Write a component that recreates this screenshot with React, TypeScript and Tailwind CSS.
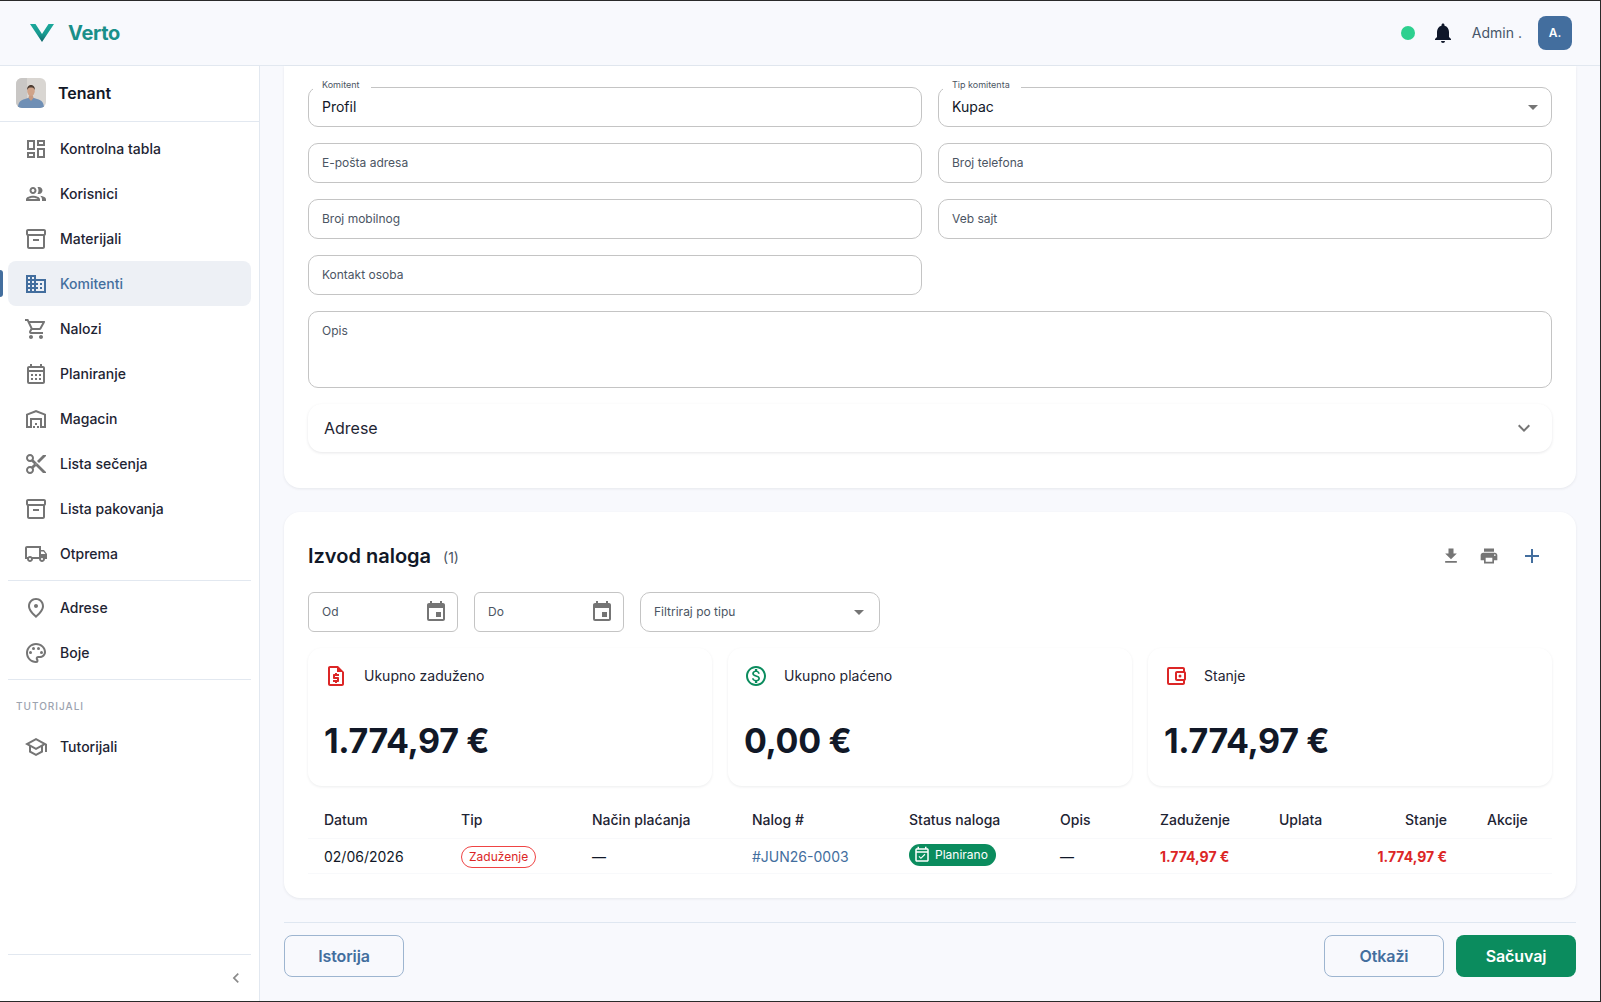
import React from "react";
import {
  MdOutlineDashboard, MdOutlinePeople, MdOutlineInventory2, MdBusiness, MdOutlineShoppingCart,
  MdOutlineCalendarMonth, MdOutlineWarehouse, MdOutlineContentCut, MdOutlineLocalShipping,
  MdOutlinePlace, MdOutlinePalette, MdOutlineSchool, MdNotifications, MdEvent, MdFileDownload,
  MdPrint, MdAdd, MdOutlineRequestQuote, MdOutlineMonetizationOn, MdOutlineAccountBalanceWallet,
  MdOutlineEventAvailable, MdExpandMore, MdChevronLeft, MdArrowDropDown,
} from "react-icons/md";

function Logo() {
  return (
    <svg width="24" height="18" viewBox="0 0 24 18" className="shrink-0">
      <defs>
        <linearGradient id="lg" x1="0" y1="0" x2="0" y2="1">
          <stop offset="0" stopColor="#1ba89b" />
          <stop offset="0.55" stopColor="#189a90" />
          <stop offset="1" stopColor="#0c6468" />
        </linearGradient>
      </defs>
      <polygon points="0,0 5.500,0 12,10 18.500,0 24,0 12,18" fill="url(#lg)" />
    </svg>
  );
}

function Photo() {
  return (
    <svg width="30" height="30" viewBox="0 0 30 30" className="rounded-[6px] shrink-0">
      <rect width="30" height="30" fill="#d9d6d2" />
      <rect width="11" height="30" fill="#c9c7c5" />
      <path d="M2 30c0-5 2-8 7-9l6-2 6 2c5 1 7 4 7 9z" fill="#6f8fb5" />
      <path d="M12.500 20l2.500 3 2.500-3-.8-3h-3.400z" fill="#c79a80" />
      <ellipse cx="15" cy="13" rx="3.800" ry="4.800" fill="#d0a388" />
      <path d="M11.200 12c-.4-3.500 1.800-5 3.800-5s4.200 1.500 3.800 5c-.9-1.800-1.800-2.400-3.800-2.400s-2.900.6-3.800 2.400z" fill="#4d3d33" />
    </svg>
  );
}

const navA = [
  { t: "Kontrolna tabla", I: MdOutlineDashboard },
  { t: "Korisnici", I: MdOutlinePeople },
  { t: "Materijali", I: MdOutlineInventory2 },
  { t: "Komitenti", I: MdBusiness, active: true },
  { t: "Nalozi", I: MdOutlineShoppingCart },
  { t: "Planiranje", I: MdOutlineCalendarMonth },
  { t: "Magacin", I: MdOutlineWarehouse },
  { t: "Lista sečenja", I: MdOutlineContentCut },
  { t: "Lista pakovanja", I: MdOutlineInventory2 },
  { t: "Otprema", I: MdOutlineLocalShipping },
];

function NavItem({ t, I, active }: { t: string; I: any; active?: boolean }) {
  return (
    <div className="relative h-[45px]">
      {active && <span className="absolute left-[-8px] top-[9px] h-[27px] w-[3px] rounded-r-[3px] bg-[#436e9e]" />}
      <div className={`h-full flex items-center gap-3 pl-4 rounded-[8px] text-sm font-medium ${active ? "bg-[#edf0f5] text-[#436e9e]" : "text-[#1e2433]"}`}>
        <I size={24} className={active ? "text-[#436e9e]" : "text-[#757575]"} />
        <span>{t}</span>
      </div>
    </div>
  );
}

function Field({ label, value, notch, arrow, className = "" }: { label?: string; value?: string; notch?: string; arrow?: boolean; className?: string }) {
  return (
    <div className={`relative h-10 rounded-[10px] border border-[#c4c4c4] bg-white flex items-center pl-[13px] pr-[6px] ${className}`}>
      {notch && (
        <span className="absolute left-[4px] top-[-10px] bg-white pl-[9px] pr-[11px] text-[9px] leading-[14px] text-[#4b5563]">{notch}</span>
      )}
      {value ? (
        <span className="text-sm text-[#111827]">{value}</span>
      ) : (
        <span className="text-xs text-[#4b5563]">{label}</span>
      )}
      {arrow && <MdArrowDropDown size={24} className="ml-auto text-[#757575]" />}
    </div>
  );
}

function DateField({ label }: { label: string }) {
  return (
    <div className="h-10 w-[150px] rounded-[6px] border border-[#c4c4c4] flex items-center justify-between pl-[13px] pr-[9px]">
      <span className="text-xs text-[#4b5563]">{label}</span>
      <MdEvent size={24} className="text-[#757575]" />
    </div>
  );
}

function Stat({ I, color, label, value }: { I: any; color: string; label: string; value: string }) {
  return (
    <div className="h-[138px] rounded-[14px] bg-white shadow-[0_1px_3px_rgba(15,23,42,0.08)] pl-4 pt-4">
      <div className="flex items-center gap-4 h-6">
        <I size={24} className={color} />
        <span className="text-sm text-[#1e2433]">{label}</span>
      </div>
      <div className="mt-[33px] text-[34px] leading-10 tracking-[-0.34px] font-bold text-[#111827]">{value}</div>
    </div>
  );
}

const cols = "grid grid-cols-[137px_131px_160px_157px_151px_100px_119px_80px_120px_89px] items-center";

export default function App() {
  return (
    <div className="w-[1601px] h-[1002px] overflow-hidden border-t border-r border-b border-[#2a2a2a] bg-[#f8f9fd] font-['Inter',sans-serif] flex flex-col">
      <header className="h-[65px] shrink-0 border-b border-[#e2e8f0] flex items-center pl-[30px] pr-7">
        <Logo />
        <span className="ml-[14px] text-xl font-bold tracking-[-0.3px] text-[#1a8f8a]">Verto</span>
        <div className="ml-auto flex items-center gap-4">
          <span className="w-[14px] h-[14px] rounded-full bg-[#2dd08f]" />
          <MdNotifications size={24} className="text-[#0f172a]" />
          <span className="ml-[1px] text-sm text-[#475569]">Admin .</span>
          <span className="w-[34px] h-[34px] rounded-[8px] bg-[#436e9e] flex items-center justify-center text-xs font-semibold text-white">A.</span>
        </div>
      </header>

      <div className="flex flex-1 min-h-0">
        <aside className="w-[260px] shrink-0 bg-white border-r border-[#e2e8f0] flex flex-col">
          <div className="h-[56px] shrink-0 border-b border-[#e2e8f0] flex items-center gap-3 pl-4 pb-[1px]">
            <Photo />
            <span className="text-base font-semibold text-[#111827]">Tenant</span>
          </div>
          <nav className="flex-1 flex flex-col px-2 pt-[4px]">
            {navA.map((n) => <NavItem key={n.t} {...n} />)}
            <div className="mt-1 mb-1 h-px bg-[#e2e8f0]" />
            <NavItem t="Adrese" I={MdOutlinePlace} />
            <NavItem t="Boje" I={MdOutlinePalette} />
            <div className="mt-1 h-px bg-[#e2e8f0]" />
            <div className="pl-2 mt-[20px] mb-[12px] text-[10px] leading-3 font-medium tracking-[1px] text-[#9ca3af]">TUTORIJALI</div>
            <NavItem t="Tutorijali" I={MdOutlineSchool} />
            <div className="mt-auto h-px bg-[#e2e8f0]" />
            <div className="h-[46px] flex items-center justify-end pr-[5px]">
              <MdChevronLeft size={20} className="text-[#8a8a8a]" />
            </div>
          </nav>
        </aside>

        <main className="flex-1 min-w-0 flex flex-col px-6">
          <section className="bg-white rounded-b-[16px] shadow-[0_1px_3px_rgba(15,23,42,0.08)] px-6 pt-[21px] pb-9">
            <div className="grid grid-cols-2 gap-4">
              <Field value="Profil" notch="Komitent" />
              <Field value="Kupac" notch="Tip komitenta" arrow />
              <Field label="E-pošta adresa" />
              <Field label="Broj telefona" />
              <Field label="Broj mobilnog" />
              <Field label="Veb sajt" />
              <Field label="Kontakt osoba" />
              <div />
              <div className="col-span-2 h-[77px] rounded-[10px] border border-[#c4c4c4] pl-[13px] pt-[11px] text-xs leading-4 text-[#4b5563]">Opis</div>
            </div>
            <div className="mt-4 h-12 rounded-[14px] bg-white shadow-[0_1px_3px_rgba(15,23,42,0.1)] flex items-center justify-between pl-4 pr-4">
              <span className="text-base text-[#1e2433]">Adrese</span>
              <MdExpandMore size={24} className="text-[#757575]" />
            </div>
          </section>

          <section className="mt-6 bg-white rounded-[16px] shadow-[0_1px_3px_rgba(15,23,42,0.08)] px-6 pt-[30px] pb-[24px]">
            <div className="h-7 flex items-center">
              <h2 className="text-xl font-semibold text-[#111827]">Izvod naloga</h2>
              <span className="ml-3 mt-[3px] text-sm text-[#4b5563]">(1)</span>
              <div className="ml-auto flex items-center pr-2">
                <MdFileDownload size={20} className="text-[#757575]" />
                <MdPrint size={20} className="ml-[18px] text-[#757575]" />
                <MdAdd size={24} className="ml-[21px] text-[#436e9e]" />
              </div>
            </div>
            <div className="mt-[22px] flex gap-4">
              <DateField label="Od" />
              <DateField label="Do" />
              <Field label="Filtriraj po tipu" arrow className="w-[240px] !pr-[8px]" />
            </div>
            <div className="mt-4 grid grid-cols-3 gap-4">
              <Stat I={MdOutlineRequestQuote} color="text-[#dc2626]" label="Ukupno zaduženo" value="1.774,97 €" />
              <Stat I={MdOutlineMonetizationOn} color="text-[#0b8c5e]" label="Ukupno plaćeno" value="0,00 €" />
              <Stat I={MdOutlineAccountBalanceWallet} color="text-[#dc2626]" label="Stanje" value="1.774,97 €" />
            </div>
            <div className={`${cols} mt-4 h-[37px] border-b border-[#f8f9fb] text-sm font-medium text-[#1e2433]`}>
              <div className="pl-4">Datum</div>
              <div className="pl-4">Tip</div>
              <div className="pl-4">Način plaćanja</div>
              <div className="pl-4">Nalog #</div>
              <div className="pl-4">Status naloga</div>
              <div className="pl-4">Opis</div>
              <div className="pl-4">Zaduženje</div>
              <div className="pl-4">Uplata</div>
              <div className="pr-4 text-right">Stanje</div>
              <div className="pl-6">Akcije</div>
            </div>
            <div className={`${cols} h-[35px] pt-[1px] border-b border-[#f8f9fb] text-sm text-[#111827]`}>
              <div className="pl-4">02/06/2026</div>
              <div className="pl-4">
                <span className="inline-flex h-[22px] px-[7px] items-center rounded-full border border-[#ef4444] text-xs text-[#dc2626]">Zaduženje</span>
              </div>
              <div className="pl-4">—</div>
              <div className="pl-4 text-[#436e9e]">#JUN26-0003</div>
              <div className="pl-4">
                <span className="inline-flex h-[22px] pl-[4px] pr-2 gap-[4px] items-center rounded-full bg-[#0b8c5e] text-xs text-white">
                  <MdOutlineEventAvailable size={18} />
                  Planirano
                </span>
              </div>
              <div className="pl-4">—</div>
              <div className="pl-4 font-bold text-[#dc2626]">1.774,97 €</div>
              <div />
              <div className="pr-4 text-right font-bold text-[#dc2626]">1.774,97 €</div>
              <div />
            </div>
          </section>

          <footer className="mt-6 border-t border-[#dfe7f1] pt-3 flex items-start gap-3">
            <button className="w-[120px] h-[42px] rounded-[8px] border border-[#9db5d0] text-base tracking-[-0.1px] font-semibold text-[#436e9e]">Istorija</button>
            <button className="ml-auto w-[120px] h-[42px] rounded-[8px] border border-[#9db5d0] text-base tracking-[-0.1px] font-semibold text-[#436e9e]">Otkaži</button>
            <button className="w-[120px] h-[42px] rounded-[8px] bg-[#0b8c5e] text-base tracking-[-0.1px] font-semibold text-white">Sačuvaj</button>
          </footer>
        </main>
      </div>
    </div>
  );
}
